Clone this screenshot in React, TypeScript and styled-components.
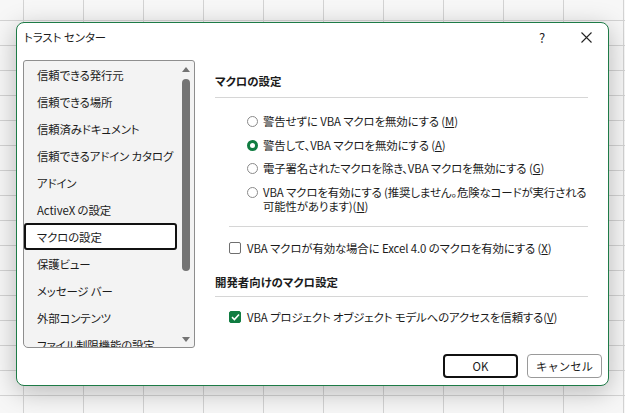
import React from "react";
import styled, { createGlobalStyle } from "styled-components";

const GlobalStyle = createGlobalStyle`
  html, body {
    margin: 0;
    padding: 0;
  }
  body {
    font-family: "Noto Sans CJK JP", "Noto Sans", sans-serif;
    font-feature-settings: "palt";
    color: #1b1b1b;
  }
`;

const GREEN = "#107c41";
const TEXT_SIZE = "11.4px";

const Desktop = styled.main`
  box-sizing: border-box;
  width: 625px;
  height: 413px;
  overflow: hidden;
  padding: 22px 0 0 16px;
  background-color: #f7f7f7;
  background-image: linear-gradient(to right, #d3d3d3 1px, transparent 1px),
    linear-gradient(to bottom, #d3d3d3 1px, transparent 1px);
  background-size: 60px 25px, 60px 25px;
  background-position: 23px 0, 0 20px;
`;

const Dialog = styled.section`
  box-sizing: border-box;
  width: 593px;
  height: 364px;
  display: flex;
  flex-direction: column;
  background: #fff;
  border: 1px solid #1e7b47;
  border-radius: 8px;
  box-shadow: 0 6px 26px rgba(0, 0, 0, 0.26);
`;

const TitleBar = styled.header`
  height: 28px;
  display: flex;
  align-items: center;
  padding-left: 7px;
  font-size: ${TEXT_SIZE};
`;

const Title = styled.span`
  flex: 1;
`;

const TitleButton = styled.span`
  width: 44px;
  display: flex;
  justify-content: center;
  align-items: center;
  font-size: 13px;
  color: #222;
`;

const Body = styled.div`
  flex: 1;
  display: flex;
  padding: 9px 0 0 6px;
  min-height: 0;
`;

const ListBox = styled.nav`
  box-sizing: border-box;
  width: 172px;
  height: 288px;
  display: flex;
  border: 1px solid #8e8e8e;
  border-radius: 3px 3px 3px 5px;
  background: #f3f3f3;
  overflow: hidden;
`;

const Items = styled.ul`
  flex: 1;
  margin: 0;
  padding: 0;
  list-style: none;
  overflow: hidden;
`;

const Item = styled.li<{ $active?: boolean }>`
  box-sizing: border-box;
  height: 27px;
  display: flex;
  align-items: center;
  padding-left: ${(p) => (p.$active ? "11px" : "12px")};
  font-size: ${TEXT_SIZE};
  letter-spacing: -0.1px;
  white-space: nowrap;
  border: ${(p) => (p.$active ? "2px solid #111" : "1px solid transparent")};
  border-radius: 3px;
  background: ${(p) => (p.$active ? "#fff" : "transparent")};
`;

const ScrollBar = styled.div`
  width: 17px;
  display: flex;
  flex-direction: column;
  align-items: center;
  padding: 6px 0 5px;
  box-sizing: border-box;
`;

const Arrow = styled.div<{ $down?: boolean }>`
  width: 0;
  height: 0;
  border-left: 4px solid transparent;
  border-right: 4px solid transparent;
  ${(p) =>
    p.$down
      ? "border-top: 5px solid #737373; margin-top: auto;"
      : "border-bottom: 5px solid #737373;"}
`;

const Thumb = styled.div`
  width: 8px;
  height: 192px;
  margin-top: 7px;
  border-radius: 4px;
  background: #747474;
`;

const Settings = styled.div`
  flex: 1;
  display: flex;
  flex-direction: column;
  padding: 0 20px 0 20px;
`;

const Heading = styled.h2<{ $gap: number }>`
  margin: ${(p) => p.$gap}px 0 0;
  font-size: ${TEXT_SIZE};
  font-weight: 700;
  line-height: 18px;
`;

const Rule = styled.hr<{ $indent?: number; $above?: number }>`
  margin: ${(p) => p.$above ?? 7}px 0 0 ${(p) => p.$indent ?? 0}px;
  border: none;
  border-top: 1px solid #d6d6d6;
  height: 0;
`;

const RadioGroup = styled.div`
  display: flex;
  flex-direction: column;
  margin-top: 12px;
  padding-left: 32px;
`;

const RadioRow = styled.label`
  display: flex;
  align-items: flex-start;
  gap: 5px;
  padding: 4px 0 5.5px;
  font-size: ${TEXT_SIZE};
  letter-spacing: -0.1px;
  line-height: 14px;
  white-space: nowrap;
`;

const Radio = styled.span<{ $checked?: boolean }>`
  box-sizing: border-box;
  flex: none;
  width: 11px;
  height: 11px;
  margin-top: 2px;
  border-radius: 50%;
  background: #fff;
  border: ${(p) => (p.$checked ? `3.5px solid ${GREEN}` : "1px solid #8a8a8a")};
`;

const CheckRow = styled.label<{ $gap: number }>`
  display: flex;
  align-items: center;
  gap: 6px;
  margin-top: ${(p) => p.$gap}px;
  padding-left: 14px;
  font-size: ${TEXT_SIZE};
  letter-spacing: -0.1px;
  line-height: 14px;
  white-space: nowrap;
`;

const Box = styled.span<{ $checked?: boolean }>`
  box-sizing: border-box;
  flex: none;
  width: 12px;
  height: 12px;
  border-radius: 2px;
  display: flex;
  align-items: center;
  justify-content: center;
  background: ${(p) => (p.$checked ? GREEN : "#fff")};
  border: 1px solid ${(p) => (p.$checked ? GREEN : "#6f6f6f")};
`;

const Key = styled.span`
  text-decoration: underline;
`;

const Footer = styled.footer`
  display: flex;
  justify-content: flex-end;
  gap: 9px;
  padding: 0 6px 7px;
`;

const Button = styled.button<{ $primary?: boolean }>`
  box-sizing: border-box;
  width: 75px;
  height: 24px;
  font-family: inherit;
  font-size: ${TEXT_SIZE};
  color: #1b1b1b;
  background: #fff;
  border-radius: 4px;
  border: ${(p) => (p.$primary ? "2px solid #111" : "1px solid #9a9a9a")};
  padding: 0;
`;

const listItems = [
  "信頼できる発行元",
  "信頼できる場所",
  "信頼済みドキュメント",
  "信頼できるアドイン カタログ",
  "アドイン",
  "ActiveX の設定",
  "マクロの設定",
  "保護ビュー",
  "メッセージ バー",
  "外部コンテンツ",
  "ファイル制限機能の設定",
];

const radios = [
  { text: "警告せずに VBA マクロを無効にする ", key: "M" },
  { text: "警告して、VBA マクロを無効にする ", key: "A", checked: true },
  { text: "電子署名されたマクロを除き、VBA マクロを無効にする ", key: "G" },
];

const CloseIcon = () => (
  <svg width="11" height="11" viewBox="0 0 11 11">
    <path d="M0.5 0.5 L10.5 10.5 M10.5 0.5 L0.5 10.5" stroke="#222" strokeWidth="1.1" />
  </svg>
);

const CheckIcon = () => (
  <svg width="9" height="8" viewBox="0 0 9 8">
    <path d="M1 4.2 L3.4 6.5 L8 1.5" stroke="#fff" strokeWidth="1.6" fill="none" />
  </svg>
);

const App = () => {
  return (
    <>
      <GlobalStyle />
      <Desktop>
        <Dialog>
          <TitleBar>
            <Title>トラスト センター</Title>
            <TitleButton>?</TitleButton>
            <TitleButton>
              <CloseIcon />
            </TitleButton>
          </TitleBar>
          <Body>
            <ListBox>
              <Items>
                {listItems.map((item) => (
                  <Item key={item} $active={item === "マクロの設定"}>
                    {item}
                  </Item>
                ))}
              </Items>
              <ScrollBar>
                <Arrow />
                <Thumb />
                <Arrow $down />
              </ScrollBar>
            </ListBox>
            <Settings>
              <Heading $gap={12}>マクロの設定</Heading>
              <Rule />
              <RadioGroup>
                {radios.map((r) => (
                  <RadioRow key={r.key}>
                    <Radio $checked={r.checked} />
                    <span>
                      {r.text}(<Key>{r.key}</Key>)
                    </span>
                  </RadioRow>
                ))}
                <RadioRow>
                  <Radio />
                  <span>
                    VBA マクロを有効にする (推奨しません。危険なコードが実行される
                    <br />
                    可能性があります)(<Key>N</Key>)
                  </span>
                </RadioRow>
              </RadioGroup>
              <Rule $indent={14} $above={8} />
              <CheckRow $gap={14}>
                <Box />
                <span>
                  VBA マクロが有効な場合に Excel 4.0 のマクロを有効にする (<Key>X</Key>)
                </span>
              </CheckRow>
              <Heading $gap={18}>開発者向けのマクロ設定</Heading>
              <Rule $above={5} />
              <CheckRow $gap={13}>
                <Box $checked>
                  <CheckIcon />
                </Box>
                <span>
                  VBA プロジェクト オブジェクト モデルへのアクセスを信頼する(<Key>V</Key>)
                </span>
              </CheckRow>
            </Settings>
          </Body>
          <Footer>
            <Button $primary>OK</Button>
            <Button>キャンセル</Button>
          </Footer>
        </Dialog>
      </Desktop>
    </>
  );
};

export default App;
